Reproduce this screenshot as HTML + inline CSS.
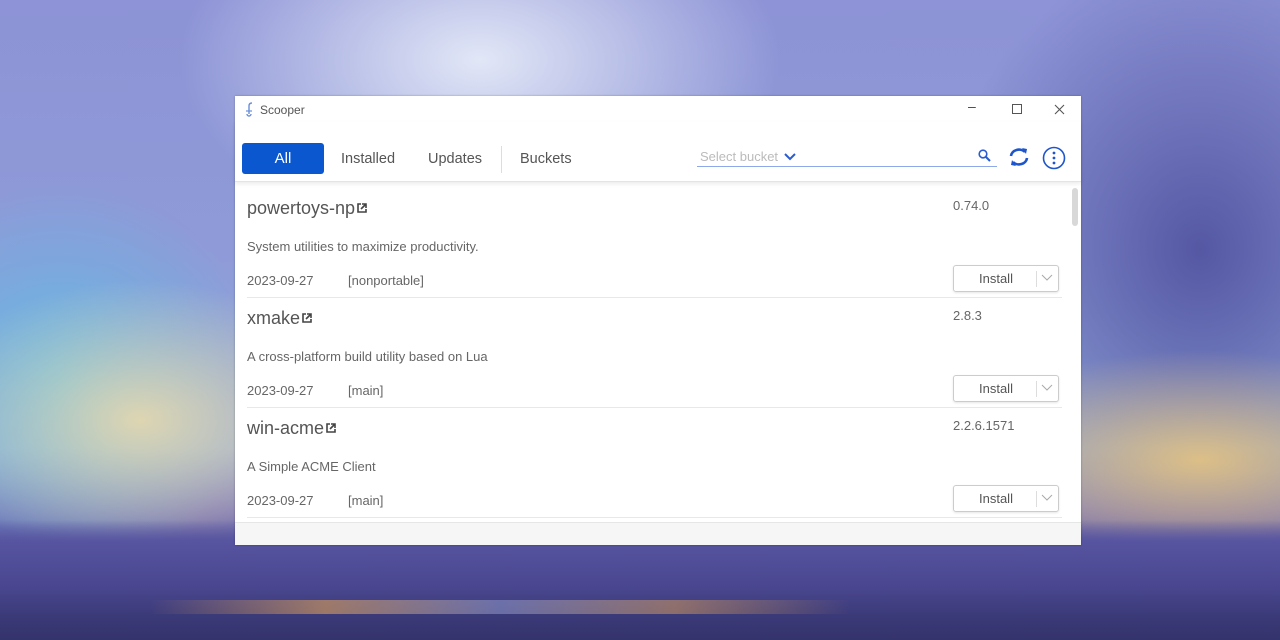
<!DOCTYPE html>
<html><head><style>
*{margin:0;padding:0;box-sizing:border-box}
body{width:1280px;height:640px;overflow:hidden;position:relative;font-family:"Liberation Sans",sans-serif;
background:
radial-gradient(ellipse 300px 180px at 480px 60px,rgba(235,240,250,.9),rgba(235,240,250,0)),
radial-gradient(ellipse 220px 140px at 140px 420px,rgba(240,220,170,.85),rgba(240,220,170,0)),
radial-gradient(ellipse 260px 110px at 1200px 460px,rgba(245,205,120,.8),rgba(245,205,120,0)),
radial-gradient(ellipse 260px 300px at 1200px 250px,rgba(70,70,150,.8),rgba(70,70,150,0)),
radial-gradient(ellipse 200px 200px at 60px 380px,rgba(90,190,230,.8),rgba(90,190,230,0)),
linear-gradient(180deg,#8d93d6 0%,#8f9bd8 40%,#8ea6d8 70%,#7c78b8 80%,#5a58a0 86%,#403f80 100%);}
.ground{position:absolute;left:0;top:520px;width:1280px;height:120px;background:linear-gradient(180deg,rgba(90,86,160,0) 0%,#5754a0 18%,#4a4790 55%,#3b3a78 80%,#34336c 100%)}
.lights{position:absolute;left:150px;top:600px;width:700px;height:14px;background:linear-gradient(90deg,rgba(0,0,0,0),rgba(220,160,90,.6),rgba(150,160,210,.5),rgba(220,160,90,.5),rgba(0,0,0,0))}
.win{position:absolute;left:235px;top:96px;width:846px;height:449px;background:#fff;box-shadow:0 0 2px rgba(0,0,0,.3)}
.title{position:absolute;left:25px;top:7px;font-size:12px;color:#555}
.ctl{position:absolute;top:4px;font-size:14px;color:#444}
.tabs{position:absolute;left:0;top:26px;width:846px;height:60px;border-bottom:1px solid #e4e4e4;box-shadow:0 2px 4px rgba(0,0,0,.08)}
.all{position:absolute;left:7px;top:21px;width:82px;height:31px;background:#0b57d0;border-radius:3px;color:#fff;font-size:15px;text-align:center;line-height:31px}
.tab{position:absolute;top:29px;font-size:14.5px;color:#555}
.sep{position:absolute;left:266px;top:24px;width:1px;height:27px;background:#ddd}
.sel{position:absolute;left:462px;top:21px;width:300px;height:24px;border-bottom:1px solid #8ea8ea;font-size:13px;color:#bbb;padding:6px 0 0 3px}
.item{position:absolute;left:12px;width:815px;height:110px;border-bottom:1px solid #e8e8e8}
.name{position:absolute;left:0;top:10px;font-size:18px;color:#555}
.ver{position:absolute;left:706px;top:10px;font-size:13px;color:#666}
.desc{position:absolute;left:0;top:51px;font-size:13px;color:#666}
.date{position:absolute;left:0;top:85px;font-size:13px;color:#666}
.bk{position:absolute;left:101px;top:85px;font-size:13px;color:#666}
.btn{position:absolute;left:706px;top:77px;width:106px;height:27px;border:1px solid #ccc;border-radius:3px;box-shadow:0 1px 2px rgba(0,0,0,.1);font-size:13px;color:#555}
.btn span{position:absolute;left:25px;top:5px}
.btn i{position:absolute;left:82px;top:5px;width:1px;height:16px;background:#ddd}
.btn svg{position:absolute;left:87px;top:8px}
.ext{display:inline-block;vertical-align:1px;margin-left:2px}
.foot{position:absolute;left:0;top:426px;width:846px;height:23px;background:#f6f6f7;border-top:1px solid #e6e6e6}
.sb{position:absolute;left:837px;top:92px;width:6px;height:38px;background:#d8d8d8;border-radius:3px}
</style></head><body>
<div class="ground"></div><div class="lights"></div>
<div class="win">
<svg style="position:absolute;left:9px;top:6px" width="12" height="16" viewBox="0 0 12 16"><path d="M8 1c-2 0-3 1-3 3v8M3 12a2 2 0 104 0" fill="none" stroke="#6a8fd8" stroke-width="1.4"/><path d="M2 9h6" stroke="#6a8fd8" stroke-width="1.2"/></svg>
<div class="title">Scooper</div>
<div class="ctl" style="left:733px;top:2px">–</div>
<div style="position:absolute;left:777px;top:8px;width:10px;height:10px;border:1px solid #555"></div>
<svg style="position:absolute;left:819px;top:8px" width="11" height="11"><path d="M1 1L10 10M10 1L1 10" stroke="#555" stroke-width="1.1"/></svg>
<div class="tabs">
<div class="all">All</div>
<div class="tab" style="left:106px">Installed</div>
<div class="tab" style="left:193px">Updates</div>
<div class="sep"></div>
<div class="tab" style="left:285px">Buckets</div>
<div class="sel">Select bucket <svg width="12" height="8" viewBox="0 0 12 8" style="margin-left:2px"><path d="M1 1l5 5 5-5" fill="none" stroke="#2a5cd0" stroke-width="2"/></svg></div>
<svg style="position:absolute;left:743px;top:27px" width="13" height="13" viewBox="0 0 13 13"><circle cx="5" cy="5" r="3.8" fill="none" stroke="#2a5cd0" stroke-width="1.6"/><path d="M8 8l4 4" stroke="#2a5cd0" stroke-width="2"/></svg>
<svg style="position:absolute;left:773px;top:25px" width="22" height="20" viewBox="0 0 22 20"><path d="M3 9a8 7 0 0114-4" fill="none" stroke="#1d55cc" stroke-width="2.6"/><path d="M14 1l5 1-1 5z" fill="#1d55cc"/><path d="M19 11a8 7 0 01-14 4" fill="none" stroke="#1d55cc" stroke-width="2.6"/><path d="M8 19l-5-1 1-5z" fill="#1d55cc"/></svg>
<svg style="position:absolute;left:807px;top:24px" width="24" height="24" viewBox="0 0 24 24"><circle cx="12" cy="12" r="10.5" fill="none" stroke="#1d55cc" stroke-width="1.6"/><circle cx="12" cy="7" r="1.4" fill="#1d55cc"/><circle cx="12" cy="12" r="1.4" fill="#1d55cc"/><circle cx="12" cy="17" r="1.4" fill="#1d55cc"/></svg>
</div>
<div class="sb"></div>
<div class="item" style="top:92px"><div class="name">powertoys-np<svg class="ext" width="10" height="10" viewBox="0 0 10 10"><path d="M4 1H1v8h8V6" fill="none" stroke="#444" stroke-width="1.6"/><path d="M5 1h4v4M9 1L4 6" fill="none" stroke="#444" stroke-width="1.6"/></svg></div><div class="ver">0.74.0</div><div class="desc">System utilities to maximize productivity.</div><div class="date">2023-09-27</div><div class="bk">[nonportable]</div><div class="btn"><span>Install</span><i></i><svg width="12" height="8" viewBox="0 0 12 8"><path d="M1 1l5 5 5-5" fill="none" stroke="#aaa"/></svg></div></div>
<div class="item" style="top:202px"><div class="name">xmake<svg class="ext" width="10" height="10" viewBox="0 0 10 10"><path d="M4 1H1v8h8V6" fill="none" stroke="#444" stroke-width="1.6"/><path d="M5 1h4v4M9 1L4 6" fill="none" stroke="#444" stroke-width="1.6"/></svg></div><div class="ver">2.8.3</div><div class="desc">A cross-platform build utility based on Lua</div><div class="date">2023-09-27</div><div class="bk">[main]</div><div class="btn"><span>Install</span><i></i><svg width="12" height="8" viewBox="0 0 12 8"><path d="M1 1l5 5 5-5" fill="none" stroke="#aaa"/></svg></div></div>
<div class="item" style="top:312px"><div class="name">win-acme<svg class="ext" width="10" height="10" viewBox="0 0 10 10"><path d="M4 1H1v8h8V6" fill="none" stroke="#444" stroke-width="1.6"/><path d="M5 1h4v4M9 1L4 6" fill="none" stroke="#444" stroke-width="1.6"/></svg></div><div class="ver">2.2.6.1571</div><div class="desc">A Simple ACME Client</div><div class="date">2023-09-27</div><div class="bk">[main]</div><div class="btn"><span>Install</span><i></i><svg width="12" height="8" viewBox="0 0 12 8"><path d="M1 1l5 5 5-5" fill="none" stroke="#aaa"/></svg></div></div>
<div class="foot"></div>
</div>
</body></html>
